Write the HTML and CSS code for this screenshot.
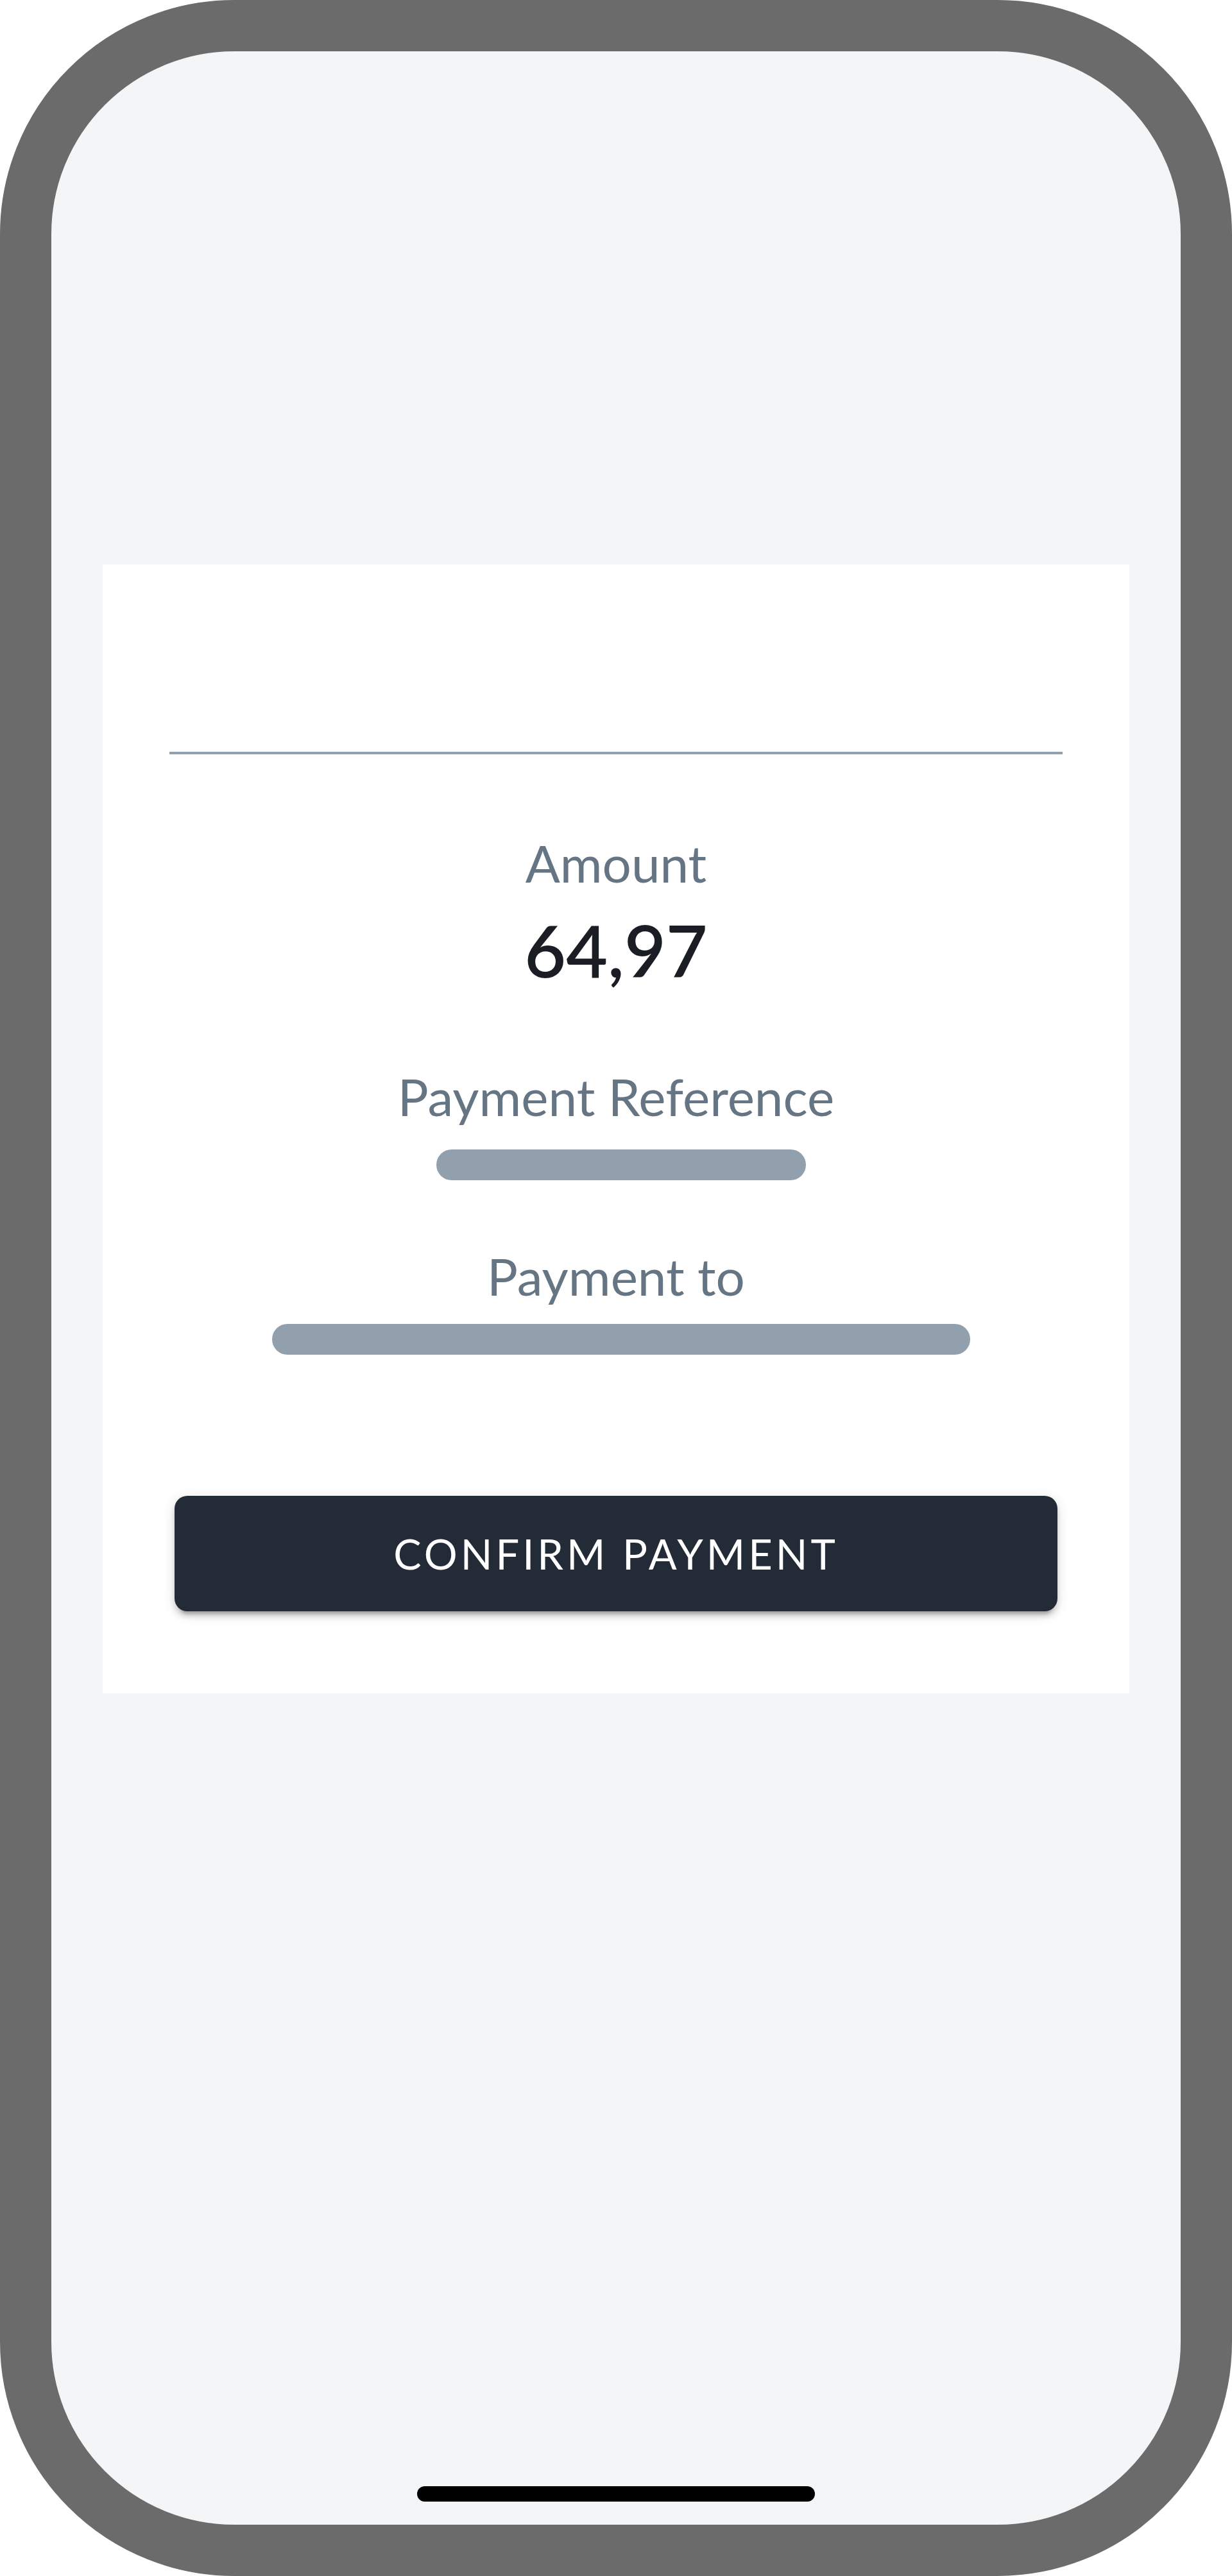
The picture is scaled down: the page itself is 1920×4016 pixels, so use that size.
FILE: index.html
```html
<!DOCTYPE html>
<html lang="en">
<head>
<meta charset="utf-8">
<title>Confirm Payment</title>
<link rel="stylesheet" href="styles.css">
</head>
<body>
  <div class="phone">
    <div class="screen">
      <section class="card">
        <div class="divider"></div>
        <div class="amount-block">
          <p class="label">Amount</p>
          <p class="amount">64,97</p>
        </div>
        <div class="field field-ref">
          <p class="label">Payment Reference</p>
          <div class="skeleton skeleton-short"></div>
        </div>
        <div class="field field-to">
          <p class="label">Payment to</p>
          <div class="skeleton skeleton-long"></div>
        </div>
        <button class="confirm-btn" type="button">CONFIRM PAYMENT</button>
      </section>
      <div class="home-indicator"></div>
    </div>
  </div>
</body>
</html>
```

FILE: styles.css
```css
* {
  box-sizing: border-box;
}

html, body {
  margin: 0;
  padding: 0;
  background: #ffffff;
}

body {
  font-family: Lato, "Open Sans", "Liberation Sans", sans-serif;
}

.phone {
  width: 1920px;
  height: 4016px;
  border: 80px solid #6b6b6b;
  border-radius: 365px;
  background: #f4f5f7;
  overflow: hidden;
}

.screen {
  height: 100%;
  display: flex;
  flex-direction: column;
  padding: 800px 80px 36px;
}

.card {
  background: #ffffff;
  display: flex;
  flex-direction: column;
  align-items: center;
  padding: 292px 104px 128px;
}

.divider {
  align-self: stretch;
  height: 4px;
  background: #929fac;
}

.label {
  margin: 0;
  font-size: 80px;
  line-height: 80px;
  font-weight: 400;
  color: #667584;
  text-align: center;
}

.amount-block {
  margin-top: 129px;
  display: flex;
  flex-direction: column;
  align-items: center;
}

.amount {
  margin: 40px 0 0;
  font-size: 112px;
  line-height: 112px;
  font-weight: 600;
  color: #1a1e24;
}

.field {
  display: flex;
  flex-direction: column;
  align-items: center;
}

.field-ref {
  margin-top: 132px;
}

.field-ref .skeleton {
  margin-top: 43px;
}

.field-to {
  margin-top: 109px;
}

.field-to .skeleton {
  margin-top: 35px;
}

.skeleton {
  height: 48px;
  border-radius: 24px;
  background: #929fac;
  margin-left: 16px;
}

.skeleton-short {
  width: 576px;
}

.skeleton-long {
  width: 1088px;
}

.confirm-btn {
  align-self: stretch;
  margin: 220px 8px 0;
  height: 180px;
  border: none;
  border-radius: 20px;
  background: #222b36;
  color: #ffffff;
  font-family: Lato, "Open Sans", "Liberation Sans", sans-serif;
  font-size: 65px;
  font-weight: 400;
  letter-spacing: 5px;
  box-shadow: 0 12px 4px -8px rgba(0, 0, 0, 0.2),
              0 8px 8px 0 rgba(0, 0, 0, 0.14),
              0 4px 20px 0 rgba(0, 0, 0, 0.12);
  cursor: pointer;
}

.home-indicator {
  margin-top: auto;
  align-self: center;
  width: 620px;
  height: 24px;
  border-radius: 12px;
  background: #000000;
}
```
